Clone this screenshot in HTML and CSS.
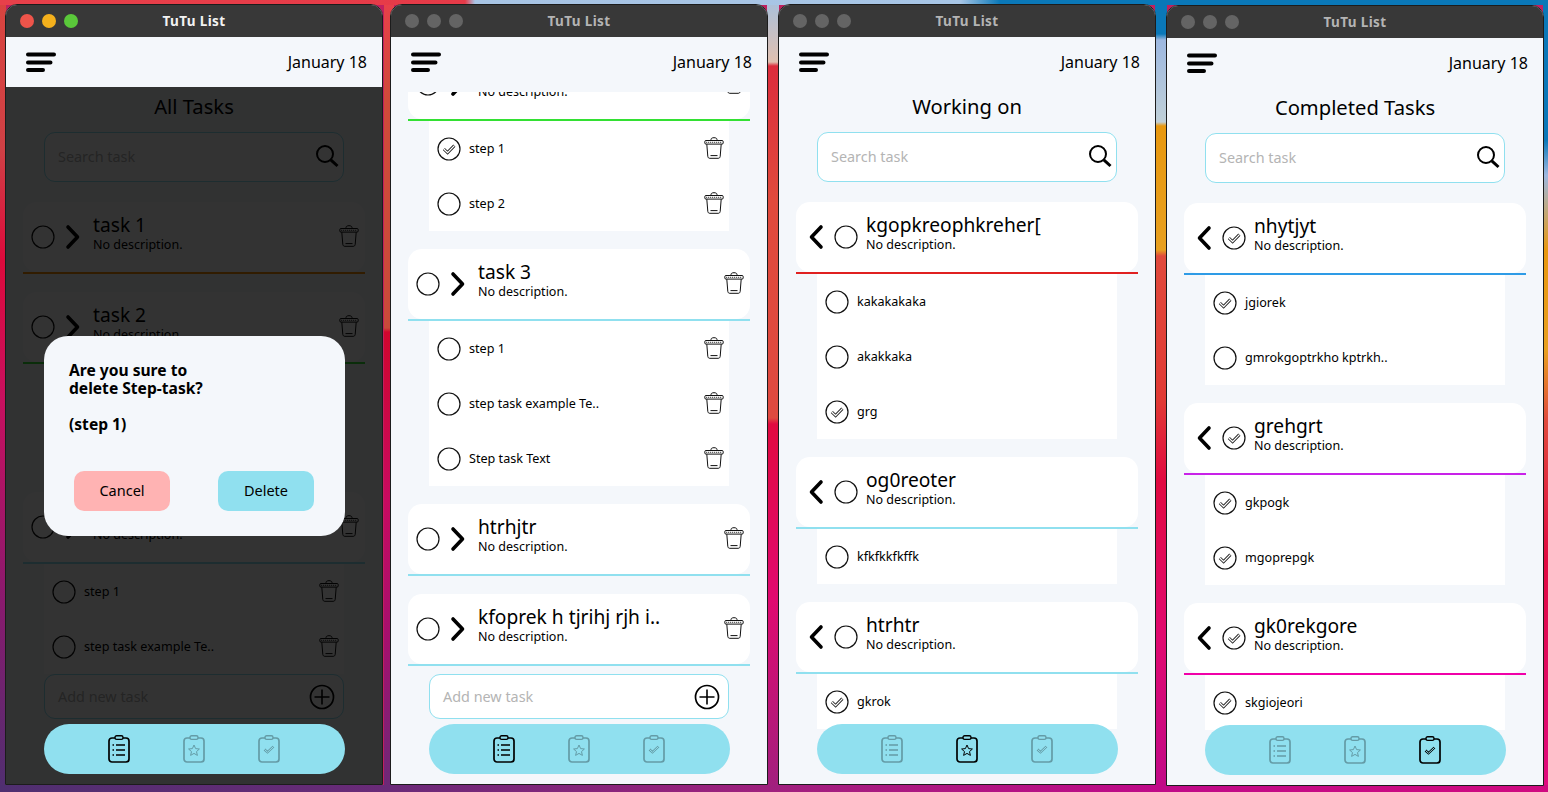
FILE: index.html
```html
<!DOCTYPE html>
<html lang="en">
<head>
  <meta charset="UTF-8">
  <title>TuTu List</title>
  <link rel="stylesheet" href="styles.css">
</head>
<body>

<svg class="sprites" width="0" height="0">
  <symbol id="i-menu" viewBox="0 0 30 20">
    <path d="M2 2.5H28M2 10.5H24.5M2 18H17" fill="none" stroke="#000" stroke-width="4" stroke-linecap="round"/>
  </symbol>
  <symbol id="i-search" viewBox="0 0 24 24">
    <circle cx="10" cy="10" r="8" fill="none" stroke="#000" stroke-width="2"/>
    <path d="M15.8 15.8L22.5 22" fill="none" stroke="#000" stroke-width="3"/>
  </symbol>
  <symbol id="i-plus" viewBox="0 0 26 26">
    <circle cx="13" cy="13" r="11.5" fill="none" stroke="#000" stroke-width="1.7"/>
    <path d="M13 5.5V20.5M5.5 13H20.5" fill="none" stroke="#000" stroke-width="1.6"/>
  </symbol>
  <symbol id="i-trash" viewBox="0 0 20 22">
    <g fill="none" stroke="#111" stroke-width="1">
      <path d="M7 3.5V2.6C7 1.4 8 .7 10 .7S13 1.4 13 2.6V3.5"/>
      <rect x=".8" y="3.5" width="18.4" height="3.6" rx="1.2"/>
      <path d="M2.2 5.3H17.8" stroke-dasharray="1 1"/>
      <path d="M2.8 7.2L3.8 19.4C3.9 20.6 4.7 21.3 5.8 21.3H14.2C15.3 21.3 16.1 20.6 16.2 19.4L17.2 7.2"/>
      <path d="M6.5 18.6H13.5"/>
    </g>
  </symbol>
  <symbol id="i-open" viewBox="0 0 24 24">
    <circle cx="12" cy="12" r="11" fill="none" stroke="#111" stroke-width="1.2"/>
  </symbol>
  <symbol id="i-done" viewBox="0 0 24 24">
    <circle cx="12" cy="12" r="11" fill="none" stroke="#111" stroke-width="1.2"/>
    <path d="M6.8 12L10.6 15.6L17.4 8.6" fill="none" stroke="#222" stroke-width="3"/>
    <path d="M6.8 12L10.6 15.6L17.4 8.6" fill="none" stroke="#fff" stroke-width="1.3"/>
  </symbol>
  <symbol id="i-right" viewBox="0 0 16 26">
    <path d="M3 3L12.5 13L3 23" fill="none" stroke="#000" stroke-width="3.6" stroke-linecap="round" stroke-linejoin="round"/>
  </symbol>
  <symbol id="i-left" viewBox="0 0 16 26">
    <path d="M13 3L3.5 13L13 23" fill="none" stroke="#000" stroke-width="3.6" stroke-linecap="round" stroke-linejoin="round"/>
  </symbol>
  <symbol id="i-board" viewBox="0 0 22 28">
    <rect x="1" y="3" width="20" height="24" rx="3" fill="none" stroke="#000" stroke-width="1.7"/>
    <rect x="7" y=".8" width="8" height="3.6" rx="1.6" fill="#90e0ef" stroke="#000" stroke-width="1.4"/>
  </symbol>
  <symbol id="i-list" viewBox="0 0 22 28">
    <use href="#i-board"/>
    <path d="M8 10H17M8 15H17M8 20H17" stroke="#000" stroke-width="1.6"/>
    <path d="M4.5 10H6M4.5 15H6M4.5 20H6" stroke="#000" stroke-width="1.4"/>
  </symbol>
  <symbol id="i-star" viewBox="0 0 22 28">
    <use href="#i-board"/>
    <path d="M11 10L12.6 13.6L16.4 14L13.5 16.6L14.4 20.4L11 18.4L7.6 20.4L8.5 16.6L5.6 14L9.4 13.6Z" fill="none" stroke="#000" stroke-width="1"/>
  </symbol>
  <symbol id="i-check" viewBox="0 0 22 28">
    <use href="#i-board"/>
    <path d="M6.5 14.5L9.5 17.2L15.5 11.5" fill="none" stroke="#000" stroke-width="2.4"/>
    <path d="M6.5 14.5L9.5 17.2L15.5 11.5" fill="none" stroke="#90e0ef" stroke-width="1"/>
  </symbol>
</svg>

<div class="desktop">

  <!-- window 1: delete dialog open -->
  <section class="window win-1 active">
    <div class="titlebar">
      <span class="dot red"></span><span class="dot yellow"></span><span class="dot green"></span>
      <span class="win-title">TuTu List</span>
    </div>
    <div class="app">
      <header class="app-head">
        <svg class="menu-icon"><use href="#i-menu"/></svg>
        <span class="date">January 18</span>
      </header>
      <div class="content">
        <h1 class="page-title">All Tasks</h1>
        <div class="field search">
          <span class="placeholder">Search task</span>
          <svg class="field-icon"><use href="#i-search"/></svg>
        </div>
        <div class="task-list">
          <div class="task line-orange">
            <div class="task-head">
              <svg class="tick"><use href="#i-open"/></svg>
              <svg class="chevron"><use href="#i-right"/></svg>
              <div class="task-text"><div class="task-name">task 1</div><div class="task-desc">No description.</div></div>
              <svg class="trash"><use href="#i-trash"/></svg>
            </div>
          </div>
          <div class="task line-green">
            <div class="task-head">
              <svg class="tick"><use href="#i-open"/></svg>
              <svg class="chevron"><use href="#i-right"/></svg>
              <div class="task-text"><div class="task-name">task 2</div><div class="task-desc">No description.</div></div>
              <svg class="trash"><use href="#i-trash"/></svg>
            </div>
            <div class="steps">
              <div class="step"><svg class="tick"><use href="#i-done"/></svg><span class="step-name">step 1</span><svg class="trash"><use href="#i-trash"/></svg></div>
              <div class="step"><svg class="tick"><use href="#i-open"/></svg><span class="step-name">step 2</span><svg class="trash"><use href="#i-trash"/></svg></div>
            </div>
          </div>
          <div class="task line-sky">
            <div class="task-head">
              <svg class="tick"><use href="#i-open"/></svg>
              <svg class="chevron"><use href="#i-right"/></svg>
              <div class="task-text"><div class="task-name">task 3</div><div class="task-desc">No description.</div></div>
              <svg class="trash"><use href="#i-trash"/></svg>
            </div>
            <div class="steps">
              <div class="step"><svg class="tick"><use href="#i-open"/></svg><span class="step-name">step 1</span><svg class="trash"><use href="#i-trash"/></svg></div>
              <div class="step"><svg class="tick"><use href="#i-open"/></svg><span class="step-name">step task example Te..</span><svg class="trash"><use href="#i-trash"/></svg></div>
            </div>
          </div>
        </div>
      </div>
      <div class="dock dock-add">
        <div class="field add">
          <span class="placeholder">Add new task</span>
          <svg class="field-icon plus"><use href="#i-plus"/></svg>
        </div>
      </div>
      <div class="overlay"></div>
      <div class="dock">
        <nav class="nav">
          <svg class="nav-icon"><use href="#i-list"/></svg>
          <svg class="nav-icon off"><use href="#i-star"/></svg>
          <svg class="nav-icon off"><use href="#i-check"/></svg>
        </nav>
      </div>
      <div class="dialog">
        <p class="dialog-text">Are you sure to<br>delete Step-task?</p>
        <p class="dialog-text">(step 1)</p>
        <div class="dialog-buttons">
          <button class="btn btn-cancel">Cancel</button>
          <button class="btn btn-delete">Delete</button>
        </div>
      </div>
    </div>
  </section>

  <!-- window 2: all tasks, scrolled -->
  <section class="window win-2">
    <div class="titlebar">
      <span class="dot"></span><span class="dot"></span><span class="dot"></span>
      <span class="win-title">TuTu List</span>
    </div>
    <div class="app">
      <header class="app-head">
        <svg class="menu-icon"><use href="#i-menu"/></svg>
        <span class="date">January 18</span>
      </header>
      <div class="content">
        <div class="task-list scrolled">
          <div class="task line-green">
            <div class="task-head">
              <svg class="tick"><use href="#i-open"/></svg>
              <svg class="chevron"><use href="#i-right"/></svg>
              <div class="task-text"><div class="task-name">task 2</div><div class="task-desc">No description.</div></div>
              <svg class="trash"><use href="#i-trash"/></svg>
            </div>
            <div class="steps">
              <div class="step"><svg class="tick"><use href="#i-done"/></svg><span class="step-name">step 1</span><svg class="trash"><use href="#i-trash"/></svg></div>
              <div class="step"><svg class="tick"><use href="#i-open"/></svg><span class="step-name">step 2</span><svg class="trash"><use href="#i-trash"/></svg></div>
            </div>
          </div>
          <div class="task line-sky">
            <div class="task-head">
              <svg class="tick"><use href="#i-open"/></svg>
              <svg class="chevron"><use href="#i-right"/></svg>
              <div class="task-text"><div class="task-name">task 3</div><div class="task-desc">No description.</div></div>
              <svg class="trash"><use href="#i-trash"/></svg>
            </div>
            <div class="steps">
              <div class="step"><svg class="tick"><use href="#i-open"/></svg><span class="step-name">step 1</span><svg class="trash"><use href="#i-trash"/></svg></div>
              <div class="step"><svg class="tick"><use href="#i-open"/></svg><span class="step-name">step task example Te..</span><svg class="trash"><use href="#i-trash"/></svg></div>
              <div class="step"><svg class="tick"><use href="#i-open"/></svg><span class="step-name">Step task Text</span><svg class="trash"><use href="#i-trash"/></svg></div>
            </div>
          </div>
          <div class="task line-sky">
            <div class="task-head">
              <svg class="tick"><use href="#i-open"/></svg>
              <svg class="chevron"><use href="#i-right"/></svg>
              <div class="task-text"><div class="task-name">htrhjtr</div><div class="task-desc">No description.</div></div>
              <svg class="trash"><use href="#i-trash"/></svg>
            </div>
          </div>
          <div class="task line-sky">
            <div class="task-head">
              <svg class="tick"><use href="#i-open"/></svg>
              <svg class="chevron"><use href="#i-right"/></svg>
              <div class="task-text"><div class="task-name">kfoprek h tjrihj rjh i..</div><div class="task-desc">No description.</div></div>
              <svg class="trash"><use href="#i-trash"/></svg>
            </div>
          </div>
        </div>
      </div>
      <div class="dock">
        <div class="field add">
          <span class="placeholder">Add new task</span>
          <svg class="field-icon plus"><use href="#i-plus"/></svg>
        </div>
        <nav class="nav">
          <svg class="nav-icon"><use href="#i-list"/></svg>
          <svg class="nav-icon off"><use href="#i-star"/></svg>
          <svg class="nav-icon off"><use href="#i-check"/></svg>
        </nav>
      </div>
    </div>
  </section>

  <!-- window 3: working on -->
  <section class="window win-3">
    <div class="titlebar">
      <span class="dot"></span><span class="dot"></span><span class="dot"></span>
      <span class="win-title">TuTu List</span>
    </div>
    <div class="app">
      <header class="app-head">
        <svg class="menu-icon"><use href="#i-menu"/></svg>
        <span class="date">January 18</span>
      </header>
      <div class="content">
        <h1 class="page-title">Working on</h1>
        <div class="field search">
          <span class="placeholder">Search task</span>
          <svg class="field-icon"><use href="#i-search"/></svg>
        </div>
        <div class="task-list">
          <div class="task line-red">
            <div class="task-head back">
              <svg class="chevron"><use href="#i-left"/></svg>
              <svg class="tick"><use href="#i-open"/></svg>
              <div class="task-text"><div class="task-name">kgopkreophkreher[</div><div class="task-desc">No description.</div></div>
            </div>
            <div class="steps">
              <div class="step"><svg class="tick"><use href="#i-open"/></svg><span class="step-name">kakakakaka</span></div>
              <div class="step"><svg class="tick"><use href="#i-open"/></svg><span class="step-name">akakkaka</span></div>
              <div class="step"><svg class="tick"><use href="#i-done"/></svg><span class="step-name">grg</span></div>
            </div>
          </div>
          <div class="task line-sky">
            <div class="task-head back">
              <svg class="chevron"><use href="#i-left"/></svg>
              <svg class="tick"><use href="#i-open"/></svg>
              <div class="task-text"><div class="task-name">og0reoter</div><div class="task-desc">No description.</div></div>
            </div>
            <div class="steps">
              <div class="step"><svg class="tick"><use href="#i-open"/></svg><span class="step-name">kfkfkkfkffk</span></div>
            </div>
          </div>
          <div class="task line-sky">
            <div class="task-head back">
              <svg class="chevron"><use href="#i-left"/></svg>
              <svg class="tick"><use href="#i-open"/></svg>
              <div class="task-text"><div class="task-name">htrhtr</div><div class="task-desc">No description.</div></div>
            </div>
            <div class="steps">
              <div class="step"><svg class="tick"><use href="#i-done"/></svg><span class="step-name">gkrok</span></div>
            </div>
          </div>
        </div>
      </div>
      <div class="dock">
        <nav class="nav">
          <svg class="nav-icon off"><use href="#i-list"/></svg>
          <svg class="nav-icon"><use href="#i-star"/></svg>
          <svg class="nav-icon off"><use href="#i-check"/></svg>
        </nav>
      </div>
    </div>
  </section>

  <!-- window 4: completed -->
  <section class="window win-4">
    <div class="titlebar">
      <span class="dot"></span><span class="dot"></span><span class="dot"></span>
      <span class="win-title">TuTu List</span>
    </div>
    <div class="app">
      <header class="app-head">
        <svg class="menu-icon"><use href="#i-menu"/></svg>
        <span class="date">January 18</span>
      </header>
      <div class="content">
        <h1 class="page-title">Completed Tasks</h1>
        <div class="field search">
          <span class="placeholder">Search task</span>
          <svg class="field-icon"><use href="#i-search"/></svg>
        </div>
        <div class="task-list">
          <div class="task line-blue">
            <div class="task-head back">
              <svg class="chevron"><use href="#i-left"/></svg>
              <svg class="tick"><use href="#i-done"/></svg>
              <div class="task-text"><div class="task-name">nhytjyt</div><div class="task-desc">No description.</div></div>
            </div>
            <div class="steps">
              <div class="step"><svg class="tick"><use href="#i-done"/></svg><span class="step-name">jgiorek</span></div>
              <div class="step"><svg class="tick"><use href="#i-open"/></svg><span class="step-name">gmrokgoptrkho kptrkh..</span></div>
            </div>
          </div>
          <div class="task line-purple">
            <div class="task-head back">
              <svg class="chevron"><use href="#i-left"/></svg>
              <svg class="tick"><use href="#i-done"/></svg>
              <div class="task-text"><div class="task-name">grehgrt</div><div class="task-desc">No description.</div></div>
            </div>
            <div class="steps">
              <div class="step"><svg class="tick"><use href="#i-done"/></svg><span class="step-name">gkpogk</span></div>
              <div class="step"><svg class="tick"><use href="#i-done"/></svg><span class="step-name">mgoprepgk</span></div>
            </div>
          </div>
          <div class="task line-pink">
            <div class="task-head back">
              <svg class="chevron"><use href="#i-left"/></svg>
              <svg class="tick"><use href="#i-done"/></svg>
              <div class="task-text"><div class="task-name">gk0rekgore</div><div class="task-desc">No description.</div></div>
            </div>
            <div class="steps">
              <div class="step"><svg class="tick"><use href="#i-done"/></svg><span class="step-name">skgiojeori</span></div>
            </div>
          </div>
        </div>
      </div>
      <div class="dock">
        <nav class="nav">
          <svg class="nav-icon off"><use href="#i-list"/></svg>
          <svg class="nav-icon off"><use href="#i-star"/></svg>
          <svg class="nav-icon"><use href="#i-check"/></svg>
        </nav>
      </div>
    </div>
  </section>

</div>

</body>
</html>
```

FILE: styles.css
```css
html, body { margin: 0; padding: 0; }
body { font-family: "Noto Sans", sans-serif; color: #000; overflow: hidden; }
.sprites { position: absolute; }

/* wallpaper only shows in the gaps, so it is painted as strips */
.desktop {
  position: relative;
  width: 1548px;
  height: 792px;
  overflow: hidden;
  background-color: #c0205f;
  background-repeat: no-repeat;
  background-image:
    linear-gradient(to right, #e8404a 0, #e63a48 465px, #a8c4e4 475px, #a8c6e6 960px, #0a78b8 1000px, #0a78b8 100%),
    linear-gradient(to right, #4f2f70 0, #6a2a78 390px, #a0207e 770px, #c00a88 1160px, #d00a80 100%),
    linear-gradient(#d9443f 0, #cf4045 150px, #dd0a3c 260px, #c8105f 400px, #8a1a6e 600px, #4f2f70 100%),
    linear-gradient(#e8404a 0, #cf4a3a 100px, #c94a3a 328px, #d0062e 332px, #c80a60 500px, #a5106e 640px, #6a2a78 100%),
    linear-gradient(#a8c0dc 0, #e0c0b0 62px, #dc2c3c 66px, #e04a3c 200px, #df4a40 418px, #e00a40 424px, #e00a70 600px, #a0207e 100%),
    linear-gradient(#0a78b8 0, #0a78b8 34px, #9db8e0 40px, #c0d0d8 122px, #e8980f 126px, #e8a020 250px, #e04a3c 256px, #e03a34 400px, #e00a40 480px, #e00a70 640px, #c00a88 100%),
    linear-gradient(#0a78b8 0, #0a78b8 140px, #9db8e0 175px, #e8980f 250px, #e8a020 350px, #e04a3c 420px, #e00a40 560px, #e00a80 100%);
  background-size: 100% 5px, 100% 7px, 6px 100%, 10px 100%, 12px 100%, 12px 100%, 5px 100%;
  background-position: 0 0, 0 785px, 0 0, 384px 0, 767px 0, 1155px 0, 1543px 0;
}

/* windows sit on a free desktop */
.window {
  position: absolute;
  top: 4px;
  width: 378px;
  height: 781px;
  box-sizing: border-box;
  border: 1px solid #1c1c1c;
  border-radius: 12px 12px 0 0;
  display: flex;
  flex-direction: column;
  overflow: hidden;
  background: #f4f7fb;
}
.win-1 { left: 5px; }
.win-2 { left: 390px; }
.win-3 { left: 778px; }
.win-4 { left: 1166px; top: 5px; }

.titlebar {
  flex: 0 0 32px;
  position: relative;
  display: flex;
  align-items: center;
  gap: 8px;
  padding-left: 14px;
  background: #383838;
}
.dot { width: 14px; height: 14px; border-radius: 50%; background: #646464; }
.dot.red { background: #ee544a; }
.dot.yellow { background: #f4b01c; }
.dot.green { background: #5ac83a; }
.win-title {
  position: absolute;
  left: 0;
  right: 0;
  text-align: center;
  font-size: 13.5px;
  font-weight: 700;
  letter-spacing: .4px;
  color: #b4b4b4;
}
.active .win-title { color: #f2f2f2; }

.app { position: relative; flex: 1; display: flex; flex-direction: column; min-height: 0; }
.app-head {
  flex: 0 0 50px;
  display: flex;
  align-items: center;
  justify-content: space-between;
  padding: 0 15px 0 20px;
  background: #f4f7fb;
}
.menu-icon { width: 30px; height: 20px; }
.date { font-size: 16px; }

.content { flex: 1; margin-top: 5px; min-height: 0; overflow: hidden; }
.page-title {
  margin: 0 0 10px;
  height: 30px;
  line-height: 28px;
  text-align: center;
  font-size: 20.2px;
  font-weight: 400;
}

.field {
  width: 300px;
  box-sizing: border-box;
  display: flex;
  align-items: center;
  justify-content: space-between;
  padding: 0 8px 0 13px;
  background: #fff;
  border: 1px solid #90e0ef;
  border-radius: 11px;
}
.search { height: 50px; margin: 0 auto; padding-right: 4px; }
.add { height: 45px; }
.placeholder { font-size: 14.4px; color: #b4b4b4; padding-bottom: 1px; }
.field-icon { width: 24px; height: 24px; }
.search .field-icon { margin-bottom: 2px; }
.plus { width: 26px; height: 26px; }

.task-list { margin: 20px 17px 0; }
.task-list.scrolled { margin-top: -43px; }
.task { margin-bottom: 18px; display: flow-root; }
.task-head {
  height: 70px;
  margin-bottom: 2px;
  display: flex;
  align-items: center;
  padding: 0 6px 0 8px;
  background: #fff;
  border-radius: 14px;
  box-sizing: border-box;
  position: relative;
}
/* coloured rule under the card */
.task-head::after {
  content: "";
  position: absolute;
  left: 0;
  right: 0;
  bottom: -2px;
  height: 2px;
  background: var(--rule);
}
.line-orange { --rule: #f58a00; }
.line-green { --rule: #33e033; }
.line-sky { --rule: #90e0ef; }
.line-red { --rule: #e02020; }
.line-blue { --rule: #2e9be6; }
.line-purple { --rule: #c822e8; }
.line-pink { --rule: #f000a8; }

.tick { flex: none; width: 24px; height: 24px; }
.chevron { flex: none; width: 16px; height: 26px; margin-left: 10px; }
.task-text { flex: 1; margin-left: 12px; min-width: 0; margin-top: -6px; }
.back .chevron { margin-left: 4px; }
.back .tick { margin-left: 10px; }
.back .task-text { margin-left: 8px; }
.task-name { font-size: 19.2px; line-height: 22px; margin: -1px 0 1px; }
.task-desc { font-size: 12.5px; line-height: 16px; }
.trash { flex: none; width: 20px; height: 22px; margin-bottom: 2px; }

.steps { margin: 0 21px; background: #fff; }
.step { height: 55px; display: flex; align-items: center; padding: 0 5px 0 8px; box-sizing: border-box; }
.step-name { flex: 1; margin-left: 8px; font-size: 12.6px; padding-bottom: 1px; }

.dock {
  position: absolute;
  left: 0;
  right: 0;
  bottom: 10px;
  display: flex;
  flex-direction: column;
  align-items: center;
  gap: 5px;
}
.dock-add { bottom: 65px; }
.nav {
  width: 301px;
  height: 50px;
  display: flex;
  align-items: center;
  justify-content: center;
  gap: 53px;
  background: #90e0ef;
  border-radius: 25px;
}
.nav-icon { width: 22px; height: 28px; }
.nav-icon.off { opacity: .3; }

.overlay { position: absolute; left: 0; right: 0; top: 50px; bottom: 0; background: rgba(0, 0, 0, .8); }

.dialog {
  position: absolute;
  left: 38px;
  top: 299px;
  width: 301px;
  height: 200px;
  box-sizing: border-box;
  padding: 25px 25px 0;
  background: #f4f7fb;
  border-radius: 24px;
}
.dialog-text { margin: 0 0 18px; font-size: 15.6px; font-weight: 700; line-height: 18px; }
.dialog-buttons { display: flex; justify-content: space-between; margin: 38px 6px 0 5px; }
.btn {
  width: 96px;
  height: 40px;
  padding: 0 0 3px;
  border: 0;
  border-radius: 10px;
  font: 14.5px "Noto Sans", sans-serif;
  color: #000;
}
.btn-cancel { background: #ffb3b3; }
.btn-delete { background: #90e0ef; }
```
